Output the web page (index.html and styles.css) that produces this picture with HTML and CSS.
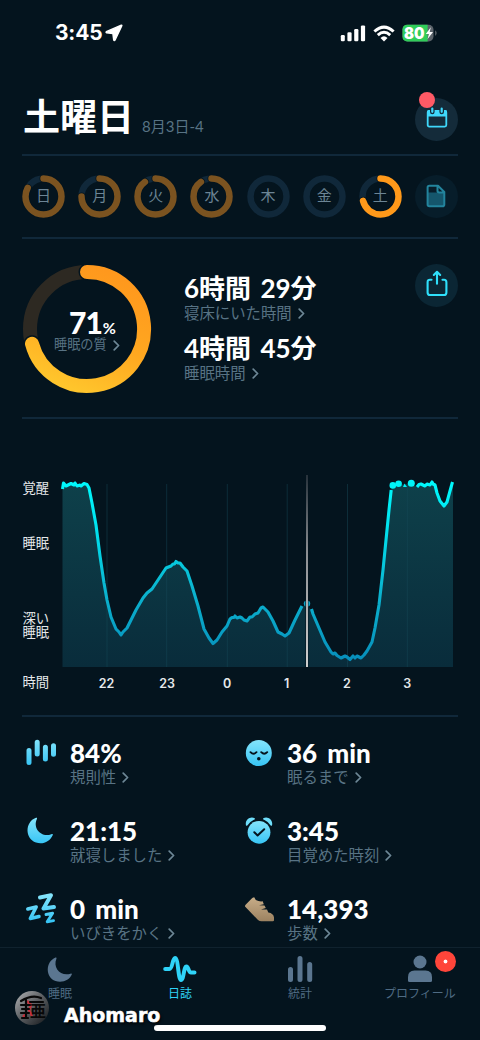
FILE: index.html
```html
<!DOCTYPE html>
<html lang="ja">
<head>
  <meta charset="UTF-8">
  <title>土曜日</title>
  <link rel="stylesheet" href="styles.css">
</head>
<body>
<svg class="defs" width="0" height="0">
  <defs>
    <linearGradient id="iconBlue" x1="0" y1="0" x2="0" y2="1">
      <stop offset="0" stop-color="#84e4fb"/>
      <stop offset="1" stop-color="#38c5f5"/>
    </linearGradient>
    <linearGradient id="iconBlueUser" gradientUnits="userSpaceOnUse" x1="0" y1="4" x2="0" y2="30">
      <stop offset="0" stop-color="#84e4fb"/>
      <stop offset="1" stop-color="#38c5f5"/>
    </linearGradient>
    <symbol id="arrow" viewBox="0 0 7 11">
      <path d="M1.2 1.2 L5.6 5.5 L1.2 9.8" fill="none" stroke="currentColor" stroke-width="1.7" stroke-linecap="round" stroke-linejoin="round"/>
    </symbol>
  </defs>
</svg>

<div class="phone">
  <div class="status">
    <div class="clock">3:45
      <svg width="18" height="18" viewBox="0 0 18 18"><path d="M16.3 1.2 L1.4 7.7 Q.6 8.4 1.6 8.8 L7.9 9.6 L8.7 16 Q9.3 17.2 10 16.2 L16.8 1.8 Q17 1 16.3 1.2Z" fill="#fff" stroke="#fff" stroke-width="1.4"/></svg>
    </div>
    <div class="signals">
      <svg width="26" height="17" viewBox="0 0 26 17" fill="#fff">
        <rect x=".8" y="10" width="4" height="6.3" rx="1.2"/>
        <rect x="7.4" y="7.3" width="4.2" height="9" rx="1.2"/>
        <rect x="14.2" y="4" width="4.2" height="12.3" rx="1.2"/>
        <rect x="20.9" y=".4" width="4.2" height="15.9" rx="1.2"/>
      </svg>
      <svg width="22" height="17" viewBox="0 0 22 17">
        <g fill="none" stroke="#fff" stroke-width="3">
          <path d="M1.4 6.5 Q11 -2.3 20.6 6.5"/>
          <path d="M4.8 10.1 Q11 4.5 17.2 10.1"/>
        </g>
        <path d="M7.5 12.9 Q11 9.7 14.5 12.9 L11 16.5Z" fill="#fff"/>
      </svg>
      <svg class="battery" width="36" height="18" viewBox="0 0 36 18">
        <rect x=".5" y=".8" width="31" height="16.6" rx="4.8" fill="#5b636a"/>
        <path d="M5.3 .8 H25.6 V17.4 H5.3 Q.5 17.4 .5 12.6 V5.6 Q.5 .8 5.3 .8Z" fill="#30cd5a"/>
        <path d="M33 6.3 Q34.8 7.3 34.8 9.1 Q34.8 10.9 33 11.9Z" fill="#4c555c"/>
        <text x="2" y="14.700" textLength="20.500" lengthAdjust="spacingAndGlyphs">80</text>
        <path d="M28.8 3.2 L23.8 10 H26.9 L25.6 15 L31 8 H27.7Z" fill="#fff"/>
      </svg>
    </div>
  </div>

  <header>
    <h1>土曜日</h1>
    <span class="date">8月3日-4</span>
    <div class="round calendar">
      <svg width="22" height="22" viewBox="0 0 22 22">
        <rect x="1.7" y="4" width="18.6" height="15.6" rx="1.5" fill="none" stroke="#3fd8fb" stroke-width="1.8"/>
        <path d="M1 9.5 V4.5 Q1 3 2.7 3 H19.3 Q21 3 21 4.5 V9.5Z" fill="#3fd8fb"/>
        <path d="M6.3 2.2 V5 M15.7 2.2 V5" stroke="#142b3a" stroke-width="4.6" stroke-linecap="round"/>
        <path d="M6.3 1.5 V4.8 M15.7 1.5 V4.8" stroke="#3fd8fb" stroke-width="2.2" stroke-linecap="round"/>
      </svg>
      <i class="dot"></i>
    </div>
  </header>

  <div class="week">
    <div class="day"><svg viewBox="0 0 43 43"><circle class="track" cx="21.5" cy="21.5" r="18"/><circle class="gap" cx="21.5" cy="21.5" r="18" pathLength="100" stroke-dasharray="83 100"/><circle class="arc" cx="21.5" cy="21.5" r="18" pathLength="100" stroke-dasharray="83 100"/></svg><span>日</span></div>
    <div class="day"><svg viewBox="0 0 43 43"><circle class="track" cx="21.5" cy="21.5" r="18"/><circle class="gap" cx="21.5" cy="21.5" r="18" pathLength="100" stroke-dasharray="75 100"/><circle class="arc" cx="21.5" cy="21.5" r="18" pathLength="100" stroke-dasharray="75 100"/></svg><span>月</span></div>
    <div class="day"><svg viewBox="0 0 43 43"><circle class="track" cx="21.5" cy="21.5" r="18"/><circle class="gap" cx="21.5" cy="21.5" r="18" pathLength="100" stroke-dasharray="90 100"/><circle class="arc" cx="21.5" cy="21.5" r="18" pathLength="100" stroke-dasharray="90 100"/></svg><span>火</span></div>
    <div class="day"><svg viewBox="0 0 43 43"><circle class="track" cx="21.5" cy="21.5" r="18"/><circle class="gap" cx="21.5" cy="21.5" r="18" pathLength="100" stroke-dasharray="90 100"/><circle class="arc" cx="21.5" cy="21.5" r="18" pathLength="100" stroke-dasharray="90 100"/></svg><span>水</span></div>
    <div class="day"><svg viewBox="0 0 43 43"><circle class="track" cx="21.5" cy="21.5" r="18"/></svg><span>木</span></div>
    <div class="day"><svg viewBox="0 0 43 43"><circle class="track" cx="21.5" cy="21.5" r="18"/></svg><span>金</span></div>
    <div class="day today"><svg viewBox="0 0 43 43"><circle class="track" cx="21.5" cy="21.5" r="18"/><circle class="gap" cx="21.5" cy="21.5" r="18" pathLength="100" stroke-dasharray="71 100"/><circle class="arc" cx="21.5" cy="21.5" r="18" pathLength="100" stroke-dasharray="71 100"/></svg><span>土</span></div>
    <div class="round note">
      <svg width="20" height="24" viewBox="0 0 20 24">
        <path d="M1.6 8.500 H18.3 V20.5 Q18.3 22.2 16.6 22.2 H3.3 Q1.6 22.2 1.6 20.5Z" fill="#15566c"/>
        <path d="M3.4 1.8 H12 L18.3 8 V20.4 Q18.3 22.2 16.5 22.2 H3.4 Q1.6 22.2 1.6 20.4 V3.6 Q1.6 1.8 3.4 1.8Z M11.5 2 V6.8 Q11.5 8.5 13.2 8.5 H18" fill="none" stroke="#23849d" stroke-width="2" stroke-linejoin="round"/>
      </svg>
    </div>
  </div>

  <section class="quality">
    <div class="ring">
      <svg width="130" height="130" viewBox="0 0 130 130">
        <defs>
          <linearGradient id="ringFill" x1=".7" y1="0" x2=".3" y2="1">
            <stop offset="0" stop-color="#ff981d"/>
            <stop offset=".55" stop-color="#ffa820"/>
            <stop offset="1" stop-color="#ffc52c"/>
          </linearGradient>
        </defs>
        <circle cx="65" cy="65" r="57" fill="none" stroke="#2d2922" stroke-width="14"/>
        <path d="M65 8 A57 57 0 1 1 10 79.7" class="ring-gap"/>
        <path d="M65 8 A57 57 0 1 1 10 79.7" class="ring-arc" stroke="url(#ringFill)"/>
      </svg>
      <div class="ring-text">
        <div class="percent">71<small>%</small></div>
        <div class="label">睡眠の質<svg class="arrow"><use href="#arrow"/></svg></div>
      </div>
    </div>
    <div class="times">
      <div class="time">6時間 29分</div>
      <div class="label">寝床にいた時間<svg class="arrow"><use href="#arrow"/></svg></div>
      <div class="time">4時間 45分</div>
      <div class="label">睡眠時間<svg class="arrow"><use href="#arrow"/></svg></div>
    </div>
    <div class="round share">
      <svg width="22" height="27" viewBox="0 0 22 27" fill="none" stroke="#2fe0fb" stroke-width="2.1" stroke-linecap="round" stroke-linejoin="round">
        <path d="M5.5 9.7 H4 Q1.6 9.7 1.6 12.2 V22.4 Q1.6 25 4.2 25 H17.8 Q20.4 25 20.4 22.4 V12.2 Q20.4 9.7 18 9.7 H16.5"/>
        <path d="M11 13.8 V3 M7.8 5 L11 1.8 L14.2 5"/>
      </svg>
    </div>
  </section>

  <section class="chart">
    <svg width="436" height="294" viewBox="22 420 436 294">
      <defs>
        <linearGradient id="lineColor" gradientUnits="userSpaceOnUse" x1="0" y1="484" x2="0" y2="660">
          <stop offset="0" stop-color="#00f8fc"/>
          <stop offset=".25" stop-color="#00e2ee"/>
          <stop offset=".6" stop-color="#0bb5d0"/>
          <stop offset="1" stop-color="#078fbb"/>
        </linearGradient>
        <linearGradient id="areaColor" gradientUnits="userSpaceOnUse" x1="0" y1="484" x2="0" y2="667">
          <stop offset="0" stop-color="#0e404a"/>
          <stop offset="1" stop-color="#092c3b"/>
        </linearGradient>
        <linearGradient id="cursorColor" gradientUnits="userSpaceOnUse" x1="0" y1="475" x2="0" y2="667">
          <stop offset="0" stop-color="#27323b"/>
          <stop offset=".4" stop-color="#8b8e92"/>
          <stop offset="1" stop-color="#d0d0d0"/>
        </linearGradient>
      </defs>
      <path fill="url(#areaColor)" d="M62.5 487 L64 484 L71 484 L80 486 L87 484 L89 488 L92 503 L96 525 L100 556 L104 583 L107 600 L111 617 L116 629 L121 635 L127 628 L131 620 L136 610 L143 598 L152 589 L160 577 L166 568 L171 566 L176 562 L181 565 L187 571 L192 586 L198 606 L204 629 L209 638 L213 643 L218 639 L222 632 L227 626 L230 619 L234 617 L240 617 L247 621 L252 617 L258 613 L263 607 L268 612 L273 621 L278 632 L285 636 L289 633 L295 620 L301 608 L307 604 L313 614 L319 628 L325 642 L331 652 L337 656 L350 659 L362 657 L367 651 L372 642 L375 628 L379 605 L383 570 L386 540 L389 510 L391 490 L393 486 L405 484 L417 486 L432 484 L435 485 L438 493 L441 501 L444 505 L448 500 L450 491 L453 483 V667 H62.5Z"/>
      <path d="M107 484 V667 M166.7 484 V667 M227.3 484 V667 M287.2 484 V667 M347.5 484 V667 M407.3 484 V667" stroke="#194b5c" stroke-opacity=".45"/>
      <g fill="none" stroke="url(#lineColor)" stroke-width="3.1" stroke-linejoin="round">
        <path d="M62.5 489 L63.5 483 L66 486 L71 483.5 L74 485 L75 483 L77 486 L80 485 L81 486 L84 483.5 L87 484.5 L89 488 L92 503 L96 525 L100 556 L104 583 L107 600 L111 617 L116 629 L119 632 L121 635 L123 632 L127 628 L131 620 L136 610 L143 598 L147 593 L152 589 L160 577 L166 568 L171 566 L173 564 L174.500 564 L176 561.5 L178 563 L180 563 L183 567 L187 571 L192 586 L198 606 L204 629 L209 638 L213 643.5 L217 640 L222 632 L227 626 L230 619 L232 617.5 L234 617.500 L235 616 L237 618 L240 617 L242 618 L244 620 L247 621 L250 617 L252 617 L255 614 L258 613 L261 608 L263 607 L266 610 L268 612 L273 621 L278 632 L282 634 L285 636 L289 633 L295 620 L301 608 L302 606"/>
        <path d="M311.500 609 L313 614 L319 628 L325 642 L331 652 L333 654 L335 653 L337 655.5 L341 658 L345 656 L347 657 L350 659.5 L353 656 L355 658 L357 656 L361 658 L364 655 L367 651 L372 642 L375 628 L379 605 L383 570 L386 540 L389 510 L391.2 490"/>
        <path d="M417 487 L419 484.500 L421 484 L425 486 L427 484 L430 485 L432 482 L433 484 L435 485 L437 493 L440 501 L444 506 L447 502 L450 491 L452.500 482"/>
      </g>
      <path d="M403 487 L404.500 483.500 L407 487Z" fill="#00eef4"/>
      <g fill="#00f4f8">
        <circle cx="392.800" cy="485.400" r="3.300"/>
        <circle cx="398.600" cy="483.800" r="3.300"/>
        <circle cx="411.300" cy="483.300" r="3.500"/>
      </g>
      <circle cx="307" cy="603.600" r="3.200" fill="#0ba5c8"/>
      <path d="M306.900 475 V667" class="cursor"/>
      <rect x="306" y="475" width="2" height="192" fill="url(#cursorColor)"/>
      <g class="levels">
        <text x="22.500" y="493">覚醒</text>
        <text x="22.500" y="548">睡眠</text>
        <text x="22.500" y="623">深い</text>
        <text x="22.500" y="637">睡眠</text>
        <text x="22.500" y="687">時間</text>
      </g>
      <g class="hours">
        <text x="106.500" y="687.500">22</text>
        <text x="167" y="687.500">23</text>
        <text x="227" y="687.500">0</text>
        <text x="286.700" y="687.500">1</text>
        <text x="347" y="687.500">2</text>
        <text x="407.300" y="687.500">3</text>
      </g>
    </svg>
  </section>

  <section class="stats">
    <div class="stat">
      <svg class="icon" viewBox="0 0 34 34"><path d="M7 15.500 V27.500 M15.200 7.300 V19 M23.400 12.300 V24 M31.500 10.700 V19.200" stroke="url(#iconBlueUser)" stroke-width="5" stroke-linecap="round"/></svg>
      <div>
        <div class="value">84%</div>
        <div class="label">規則性<svg class="arrow"><use href="#arrow"/></svg></div>
      </div>
    </div>
    <div class="stat">
      <svg class="icon" viewBox="0 0 34 34"><circle cx="14.800" cy="18" r="13" fill="url(#iconBlue)"/><path d="M6.500 17.200 Q9.500 20.200 12.500 17.200 M17.200 17.200 Q20.200 20.200 23.200 17.200" fill="none" stroke="#05141e" stroke-width="1.900" stroke-linecap="round"/><circle cx="14.800" cy="23.800" r="1.800" fill="#05141e"/></svg>
      <div>
        <div class="value">36 min</div>
        <div class="label">眠るまで<svg class="arrow"><use href="#arrow"/></svg></div>
      </div>
    </div>
    <div class="stat">
      <svg class="icon" viewBox="0 0 34 34"><path d="M14 4.800 C2.500 9 3 26 14 29.600 C21 32 28 28.500 30.800 22 C31 21 30.300 20.800 29.300 21.200 C19 25 10.500 15 14.900 6 C15.300 5 15 4.500 14 4.800Z" fill="url(#iconBlue)"/></svg>
      <div>
        <div class="value">21:15</div>
        <div class="label">就寝しました<svg class="arrow"><use href="#arrow"/></svg></div>
      </div>
    </div>
    <div class="stat">
      <svg class="icon" viewBox="0 0 34 34"><circle cx="15" cy="19.300" r="11.400" fill="url(#iconBlue)"/><path d="M2 12.500 C.5 7 6.500 2.300 11 5.500 Q11.300 6.500 9.500 7 Q6 8.500 4 11.800 Q3 13.500 2 12.500Z M28 12.500 C29.500 7 23.500 2.300 19 5.500 Q18.700 6.500 20.500 7 Q24 8.500 26 11.800 Q27 13.500 28 12.500Z" fill="#6fdefa"/><path d="M10.300 19.200 L13.600 22.500 L20.200 16.200" fill="none" stroke="#05141e" stroke-width="2" stroke-linecap="round" stroke-linejoin="round"/></svg>
      <div>
        <div class="value">3:45</div>
        <div class="label">目覚めた時刻<svg class="arrow"><use href="#arrow"/></svg></div>
      </div>
    </div>
    <div class="stat">
      <svg class="icon" viewBox="0 0 34 34"><g fill="none" stroke="url(#iconBlueUser)" stroke-linejoin="round" stroke-linecap="round"><path d="M5.800 18 L14.200 16 L8.300 27.500 L17 25.500" stroke-width="3.500"/><path d="M18 6.500 L29 4.200 L21.500 17.500 L32 16" stroke-width="3.900"/><path d="M24 23.500 L30.600 22.300 L25.200 30.800 L31.500 29.600" stroke-width="2.900"/></g></svg>
      <div>
        <div class="value">0 min</div>
        <div class="label">いびきをかく<svg class="arrow"><use href="#arrow"/></svg></div>
      </div>
    </div>
    <div class="stat">
      <svg class="icon" viewBox="0 0 34 34">
        <defs><linearGradient id="shoe" x1="0" y1="0" x2="0" y2="1"><stop offset="0" stop-color="#c8ad88"/><stop offset="1" stop-color="#9c8261"/></linearGradient></defs>
        <path d="M1 15.500 Q.8 14.600 1.600 13.800 L7.500 7.800 Q8.500 6.200 10.200 6.200 L11.800 9 Q15 10.800 18.700 10.300 L19.800 13.200 L15 14.200 L20.500 14.600 L21.800 17 L17 18.500 L23 18.400 L24.300 21.500 Q29.500 22.300 30 26.500 V29.200 Q30 30.300 28.800 30.300 H17.500 Q15.500 30.300 14 29 Z" fill="url(#shoe)"/>
      </svg>
      <div>
        <div class="value">14,393</div>
        <div class="label">歩数<svg class="arrow"><use href="#arrow"/></svg></div>
      </div>
    </div>
  </section>

  <nav>
    <a>
      <svg width="34" height="30" viewBox="0 0 34 30"><path d="M12.500 2.500 C2 7 2.500 22.500 12.500 26 C19.500 28.300 26.500 25 28.800 19.500 C29 18.500 28.500 18.300 27.500 18.700 C17.500 21.500 9.500 13 13.500 3.500 C13.700 2.500 13.300 2.200 12.500 2.500Z" fill="#5b7690"/></svg>
      睡眠
    </a>
    <a class="active">
      <svg width="34" height="30" viewBox="0 0 34 30"><path d="M2.200 14 H6.500 C9.500 14 9.500 3 12 3 C15.500 3 15 25 18 25 C21 25 20.500 11.500 23.500 11.500 C25.500 11.500 25.500 17.500 28 17.500 H31.500" fill="none" stroke="#2fd3f8" stroke-width="4" stroke-linecap="round" stroke-linejoin="round"/></svg>
      日誌
    </a>
    <a>
      <svg width="34" height="30" viewBox="0 0 34 30"><path d="M7.500 14.500 V24.500 M17 3.500 V24.500 M26.700 9.500 V24.500" stroke="#5b7690" stroke-width="5" stroke-linecap="round"/></svg>
      統計
    </a>
    <a>
      <svg width="34" height="30" viewBox="0 0 34 30" fill="#5b7690"><circle cx="17" cy="7" r="6.500"/><path d="M5 25.500 V22 Q5 15.500 11.500 15.500 H22.500 Q29 15.500 29 22 V25.500 Q29 27 27.500 27 H6.500 Q5 27 5 25.500Z"/></svg>
      プロフィール
      <i class="badge"></i>
    </a>
    <div class="home"></div>
  </nav>

  <div class="author">
    <svg width="36" height="36" viewBox="0 0 36 36">
      <defs><linearGradient id="seal" x1="0" y1="0" x2="1" y2="1"><stop offset="0" stop-color="#b4b6b8"/><stop offset=".45" stop-color="#606366"/><stop offset="1" stop-color="#101316"/></linearGradient></defs>
      <circle cx="18" cy="18" r="17" fill="url(#seal)"/>
      <path d="M13 11 L17 15 L15 20 L18 26 M9 27 L12 24" stroke="#c5323d" stroke-width="2.500" fill="none"/>
      <path d="M7 11 Q18 4 27 8 M7 15 H16 M8 19 H15 M7 23 H15 M12 10 V28 M8 28 H14 M16 12 H29" fill="none" stroke="#080808" stroke-width="2.200" stroke-linecap="round"/>
      <text x="16" y="27" font-size="16" class="seal-text">亜</text>
    </svg>
    <b>Ahomaro</b>
  </div>
</div>
</body>
</html>
```
FILE: styles.css
```css
* {
  box-sizing: border-box;
}

body {
  margin: 0;
  background-color: #04141e;
  color: #fff;
  font-family: Lato, "Noto Sans CJK JP", sans-serif;
}

svg {
  display: block;
  flex-shrink: 0;
}

.defs {
  position: absolute;
}

.phone {
  position: relative;
  width: 480px;
  height: 1040px;
  overflow: hidden;
  display: flex;
  flex-direction: column;
}

/* status bar */
.status {
  height: 66px;
  padding: 0 42px 0 55px;
  display: flex;
  align-items: center;
  justify-content: space-between;
}

.clock {
  display: flex;
  align-items: center;
  gap: 3px;
  font: bold 21px/24px Inter, sans-serif;
  letter-spacing: -0.2px;
}

.signals {
  display: flex;
  align-items: center;
  gap: 7px;
}

.battery text {
  font: 900 16px Inter, sans-serif;
  fill: #fff;
}

/* title */
header {
  height: 90px;
  margin: 0 22px;
  padding-top: 32px;
  border-bottom: 2px solid #10283a;
  display: flex;
}

h1 {
  margin: 0 8px 0 1px;
  font-size: 37px;
  line-height: 38px;
  font-weight: bold;
}

.date {
  padding-top: 19px;
  font-size: 15px;
  line-height: 18px;
  color: #587384;
}

.round {
  position: relative;
  width: 43px;
  height: 43px;
  border-radius: 50%;
  background-color: #142b3a;
  display: flex;
  align-items: center;
  justify-content: center;
  flex-shrink: 0;
}

.calendar {
  margin-left: auto;
}

.calendar svg {
  margin-top: -3px;
}

.dot {
  position: absolute;
  left: 4px;
  top: -6px;
  width: 16px;
  height: 16px;
  border-radius: 50%;
  background-color: #ff5a66;
}

/* week */
.week {
  height: 83px;
  margin: 0 22px;
  padding-bottom: 1px;
  border-bottom: 2px solid #10283a;
  display: flex;
  align-items: center;
  justify-content: space-between;
}

.day {
  display: grid;
  width: 43px;
  height: 43px;
}

.day > * {
  grid-area: 1 / 1;
}

.day svg {
  width: 43px;
  height: 43px;
  transform: rotate(-90deg);
}

.day circle {
  fill: none;
  stroke-width: 6.500;
  stroke-linecap: round;
}

.day .track {
  stroke: #10283a;
}

.day .gap {
  stroke: #04141e;
  stroke-width: 8;
}

.day .arc {
  stroke: #7b5320;
}

.today .arc {
  stroke: #ff991a;
}

.day span {
  place-self: center;
  font-size: 15px;
  line-height: 20px;
  color: #6c8595;
  margin-top: -2px;
}

.note {
  background-color: #071d2a;
}

/* quality */
.quality {
  height: 180px;
  margin: 0 22px;
  border-bottom: 2px solid #10283a;
  display: flex;
}

.ring {
  display: grid;
  width: 130px;
  height: 130px;
  margin-top: 25px;
}

.ring > * {
  grid-area: 1 / 1;
}

.ring-gap,
.ring-arc {
  fill: none;
  stroke-width: 14;
  stroke-linecap: round;
}

.ring-gap {
  stroke: #04141e;
  stroke-width: 17;
}

.ring-text {
  padding: 42px 0 0 32px;
}

.percent {
  height: 31px;
  padding-left: 15px;
  font-size: 30px;
  line-height: 32px;
  font-weight: 900;
  letter-spacing: -1px;
}

.percent small {
  margin-left: 1px;
  font-size: 16px;
  font-weight: bold;
}

.label {
  display: flex;
  align-items: center;
  font-size: 15.400px;
  line-height: 20px;
  color: #587384;
  white-space: nowrap;
}

.ring .label {
  font-size: 13.200px;
  line-height: 15px;
}

.arrow {
  width: 7px;
  height: 11px;
  margin: 1px 0 0 6px;
  color: #6d8796;
}

.times {
  padding: 33px 0 0 32px;
}

.time {
  height: 31px;
  font-size: 26px;
  line-height: 33px;
  font-weight: bold;
  word-spacing: 3px;
  white-space: nowrap;
}

.times .label {
  height: 29px;
  padding-bottom: 9px;
}

.share {
  margin: 25px 0 0 auto;
  background-color: #0b2634;
}

.share svg {
  margin-top: -4px;
}

/* chart */
.chart {
  height: 298px;
  margin: 0 22px;
  padding-top: 1px;
  border-bottom: 2px solid #10283a;
}

.cursor {
  stroke: #04141e;
  stroke-width: 3;
}

.levels {
  font-size: 13.300px;
  fill: #e6e9eb;
}

.hours {
  font: 600 12.500px Inter, sans-serif;
  fill: #e6e9eb;
  text-anchor: middle;
}

/* stats */
.stats {
  height: 230px;
  overflow: hidden;
  padding: 18px 22px 0;
  display: grid;
  grid-template-columns: 217px 1fr;
  grid-auto-rows: 78px;
}

.stat {
  display: flex;
  gap: 14px;
}

.stat:nth-child(even) {
  gap: 9px;
  padding-left: 5px;
}

.icon {
  width: 34px;
  height: 34px;
}

.value {
  margin-top: 3px;
  font-size: 26px;
  line-height: 30px;
  font-weight: 900;
  word-spacing: 4px;
  white-space: nowrap;
}

.stat .label {
  margin-top: -1px;
}

/* tab bar */
nav {
  position: relative;
  height: 93px;
  border-top: 1px solid #10222e;
  display: grid;
  grid-template-columns: repeat(4, 120px);
}

nav a {
  position: relative;
  display: flex;
  flex-direction: column;
  align-items: center;
  padding-top: 7px;
  font-size: 12px;
  line-height: 17px;
  color: #4f6b83;
}

nav .active {
  color: #2fd3f8;
}

.badge {
  position: absolute;
  left: 75px;
  top: 3px;
  width: 21px;
  height: 21px;
  border-radius: 50%;
  background: radial-gradient(circle, #fff 1.500px, #ff453a 2.300px);
}

.home {
  position: absolute;
  left: 154px;
  top: 77px;
  width: 172px;
  height: 6px;
  border-radius: 3px;
  background-color: #fff;
}

/* signature over the tab bar */
.author {
  position: absolute;
  left: 14px;
  top: 990px;
  display: flex;
  align-items: center;
  gap: 14px;
}

.author b {
  margin-top: 14px;
  font: bold 19px/22px "DejaVu Sans", sans-serif;
  -webkit-text-stroke: 0.5px #fff;
  text-shadow: 1px 2px 3px #000;
}

.seal-text {
  font-family: "Noto Sans CJK JP", sans-serif;
  font-weight: bold;
  fill: #080808;
}
```
